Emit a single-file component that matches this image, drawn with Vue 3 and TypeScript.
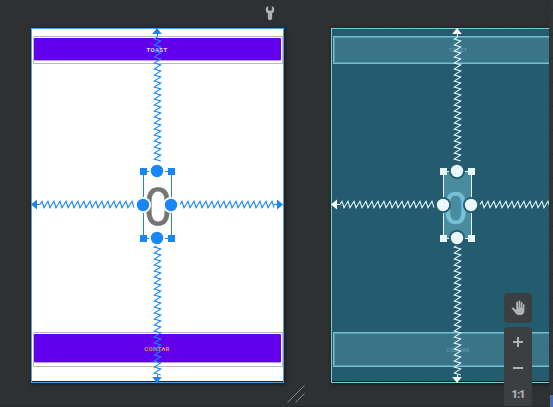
<script setup lang="ts">
type Surface = { kind: 'design' | 'blueprint' }

const surfaces: Surface[] = [{ kind: 'design' }, { kind: 'blueprint' }]

// Spring lines run along one axis with a six pixel period.
function spring(start: number, end: number, mid: number, vertical: boolean): string {
  const points: string[] = []
  const add = (along: number, across: number) =>
    points.push(vertical ? `${across},${along}` : `${along},${across}`)
  add(start, mid)
  for (let p = start; p + 6 <= end; p += 6) {
    add(p + 2, mid - 3.2)
    add(p + 4, mid + 3.2)
  }
  return points.join(' ')
}

const springs = [
  spring(9, 137, 126.5, true),
  spring(217, 350, 126.5, true),
  spring(9, 107, 176.5, false),
  spring(149, 248, 176.5, false),
]
const corners = [[109, 140], [137, 140], [109, 207], [137, 207]]
const knobs = [[126, 143], [126, 210], [112, 177], [140, 177]]
</script>

<template>
  <main class="editor">
    <section class="workspace">
      <div class="topline">
        <svg class="wrench" width="10" height="16" viewBox="0 0 10 16">
          <path d="M3.200 0V4.500H6.800V0C8.400.6 9.400 2.200 9.200 4.300C9 6 8 7 7.100 7.500V12.300Q7 14.200 5 14.200T2.900 12.300V7.500C1.900 7 1 6 .8 4.300C.6 2.200 1.600.6 3.200 0Z" />
        </svg>
      </div>
      <div class="surfaces">
        <article v-for="s in surfaces" :key="s.kind" class="surface" :class="s.kind">
          <div class="frame toast"><div class="button">TOAST</div></div>
          <div class="count"><span>0</span></div>
          <div class="frame contar"><div class="button">CONTAR</div></div>
          <svg class="constraints" width="253" height="355" viewBox="0 0 253 355">
            <rect class="outline" x=".5" y=".5" width="252" height="354" />
            <rect class="dashes" x=".5" y=".5" width="252" height="354" />
            <g class="springs">
              <polyline v-for="(p, i) in springs" :key="i" :points="p" />
            </g>
            <path class="arrows" d="M126 0l4.800 6h-9.600zM126 355l4.800-6h-9.600zM0 176.500l6-5v10zM252 176.500l-6-5v10z" />
            <path class="stems" d="M126.500 5v4M126.500 347v3M5 176.500h4M243 176.500h5" />
            <path class="selection" d="M112.500 143v67M140.500 143v67M112 143.500h28M112 210.500h28" />
            <rect v-for="([x, y], i) in corners" :key="'c' + i" class="corner" :x="x" :y="y" width="7" height="7" />
            <circle v-for="([x, y], i) in knobs" :key="'h' + i" class="halo" :cx="x" :cy="y" r="8" />
            <circle v-for="([x, y], i) in knobs" :key="'k' + i" class="knob" :cx="x" :cy="y" r="6.200" />
          </svg>
        </article>
      </div>
      <svg class="grip" width="18" height="18" viewBox="0 0 18 18"><path d="M.5 17.500l17-17M8.500 17.500l9-9" /></svg>
      <aside class="tools">
        <div class="pan">
          <svg width="15" height="16" viewBox="0 0 15 16">
            <path d="M4.500 9.500L2.200 7.600Q.8 7 .6 8.300L4.800 13.500Q5.800 15 8 15H9.500Q13 15 13.400 11V4.500Q12.700 3.500 12 4.500V8H11.500V2.500Q10.600 1.300 9.800 2.500V7.500H9.300V1.200Q8.300 0 7.500 1.200V7.500H7V2.200Q6 1 5.200 2.200V9.500Z" />
          </svg>
        </div>
        <div class="zoom">
          <svg width="12" height="12" viewBox="0 0 12 12"><path d="M1 6h10M6 1v10" /></svg>
          <svg width="12" height="12" viewBox="0 0 12 12"><path d="M1 6h10" /></svg>
          <span>1:1</span>
        </div>
      </aside>
    </section>
    <nav class="rail"><i></i></nav>
  </main>
</template>

<style>
body { margin: 0; overflow: hidden; }
</style>

<style scoped>
.editor { display: flex; width: 553px; height: 407px; overflow: hidden; background: #2f3032; font-family: Roboto, "Liberation Sans", sans-serif; }
.workspace { position: relative; width: 549px; height: 407px; overflow: hidden; box-sizing: border-box; border-bottom: 1px solid #292a2c; }
.topline { height: 28px; box-sizing: border-box; padding: 6px 0 0 265px; }
.wrench { display: block; fill: #afb1b3; }
.surfaces { display: flex; gap: 47px; width: max-content; padding-left: 31px; }
.surface { position: relative; display: flex; flex-direction: column; box-sizing: border-box; width: 253px; height: 355px; padding: 8px 1px 16px 2px; background: #fff; box-shadow: 1px 1px 4px #161718; }
.surface::after { content: ""; position: absolute; left: 1px; right: 1px; bottom: 1px; height: 1px; background: #162024; }
.frame { box-sizing: border-box; border: 1px solid #bbb; }
.toast { height: 28px; padding: 1px 1px 3px 0; }
.contar { height: 35px; padding: 1px 1px 4px 0; }
.button { box-sizing: border-box; height: 100%; display: flex; align-items: center; justify-content: center; background: #6200ee; border-radius: 1px; box-shadow: 0 1px #b59bdc; color: #e9dcfc; font-size: 6px; line-height: 6px; font-weight: 700; letter-spacing: .35px; padding: 1px 1px 0 0; }
.contar .button { color: #e0955c; padding-top: 2px; }
.count { flex: 1; display: flex; align-items: center; justify-content: center; color: #757575; font-size: 51px; line-height: 56px; }
.count span { display: block; transform: translateY(10px); -webkit-text-stroke: .4px currentColor; }
.constraints { position: absolute; left: 0; top: 0; z-index: 1; }
.outline { fill: none; stroke: #5b9fdc; }
.dashes { fill: none; stroke: none; }
.springs, .stems { fill: none; stroke: #1886f7; stroke-width: 1.1; }
.arrows, .corner, .knob { fill: #1886f7; }
.selection { fill: none; stroke: #1886f7; }
.halo { fill: #fff; }
.blueprint { background: #235c6f; }
.blueprint .frame { border: 1px solid #72c0d0; padding: 0; }
.blueprint .button { background: #397487; border: 1px solid #559caf; border-radius: 0; box-shadow: none; color: #5ba0b3; padding: 0; font-size: 5.500px; letter-spacing: .3px; font-weight: 500; }
.blueprint .count { color: #78c0d8; font-size: 44px; }
.blueprint .count span { box-sizing: border-box; width: 28px; height: 67px; padding: 9px 0 0; background: #498b9f; text-align: center; text-indent: -5px; transform: translateY(7px); }
.blueprint .outline { stroke: #5fb0c3; }
.blueprint .dashes { stroke: #86d6e6; stroke-dasharray: 2 1; }
.blueprint .springs, .blueprint .stems { stroke: #e1f2f6; }
.blueprint .arrows { fill: #fff; }
.blueprint .corner, .blueprint .knob { fill: #ebf8fe; }
.blueprint .selection { stroke: #ebf8fe; }
.blueprint .halo { fill: #235c6f; }
.grip { position: absolute; left: 287px; top: 385px; fill: none; stroke: #85878a; stroke-width: 1; }
.tools { position: absolute; left: 504px; top: 293px; z-index: 3; display: flex; flex-direction: column; gap: 4px; width: 28px; }
.pan, .zoom { display: flex; align-items: center; background: #3c3f41; border-radius: 4px; }
.pan { height: 30px; justify-content: center; fill: #afb1b3; }
.zoom { height: 90px; box-sizing: border-box; padding-top: 9px; flex-direction: column; gap: 14px; color: #afb1b3; fill: none; stroke: #afb1b3; stroke-width: 2; }
.zoom span { stroke: none; font-size: 11px; line-height: 13px; font-weight: 900; letter-spacing: -1.1px; }
.rail { width: 4px; box-sizing: border-box; padding: 395px 0 0 1px; background: repeating-linear-gradient(#313335 0 10px, #292b2d 10px 11px, #313335 11px 24px); }
.rail i { display: block; height: 12px; background: #4b6eaf; }
</style>
